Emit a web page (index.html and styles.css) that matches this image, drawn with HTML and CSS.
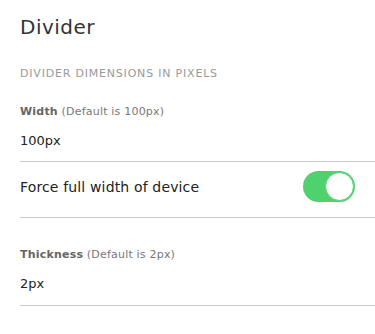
FILE: index.html
```html
<!DOCTYPE html>
<html lang="en">
<head>
    <meta charset="UTF-8" />
    <meta name="viewport" content="width=device-width, initial-scale=1" />
    <title>Divider</title>
    <link rel="stylesheet" href="styles.css">
</head>
<body>
    <div class="panel">
        <h1>Divider</h1>

        <div class="section-title">DIVIDER DIMENSIONS IN PIXELS</div>

        <div class="field">
            <label for="width"><b>Width</b> (Default is 100px)</label>
            <div class="value" id="width">100px</div>
        </div>

        <div class="toggle-row">
            <span>Force full width of device</span>
            <div class="switch on"><div class="knob"></div></div>
        </div>

        <div class="field thickness">
            <label for="thickness"><b>Thickness</b> (Default is 2px)</label>
            <div class="value" id="thickness">2px</div>
        </div>
    </div>
</body>
</html>
```

FILE: styles.css
```css
body {
    margin: 0;
    background: #fff;
    font-family: "DejaVu Sans", "Open Sans", sans-serif;
}

.panel {
    padding: 15px 0 0 20px;
}

h1 {
    margin: 0;
    font-size: 20px;
    line-height: 24px;
    font-weight: 400;
    letter-spacing: 0.5px;
    color: #333;
}

.section-title {
    margin-top: 28px;
    font-size: 11px;
    line-height: 14px;
    letter-spacing: 0.8px;
    color: #999;
}

.field {
    padding: 24px 20px 12px 0;
    border-bottom: 1px solid #ccc;
}

.field label {
    display: block;
    font-size: 11px;
    line-height: 14px;
    letter-spacing: 0.2px;
    color: #777;
}

.field label b {
    color: #666;
    font-weight: 700;
}

.value {
    margin-top: 14px;
    font-size: 13px;
    line-height: 16px;
    color: #222;
}

.thickness {
    padding-top: 30px;
    padding-bottom: 13px;
}

.toggle-row {
    display: flex;
    align-items: center;
    justify-content: space-between;
    padding: 9px 20px 15px 0;
    border-bottom: 1px solid #ccc;
    font-size: 14px;
    letter-spacing: 0.15px;
    color: #222;
}

.switch {
    width: 52px;
    height: 31px;
    border-radius: 16px;
    background: #e5e5e5;
    box-sizing: border-box;
    display: flex;
    align-items: center;
    padding: 1px;
}

.switch.on {
    background: #4fd16e;
    justify-content: flex-end;
}

.knob {
    width: 29px;
    height: 29px;
    border-radius: 50%;
    background: #fff;
    box-sizing: border-box;
    border: 1px solid #4fd16e;
}
```
